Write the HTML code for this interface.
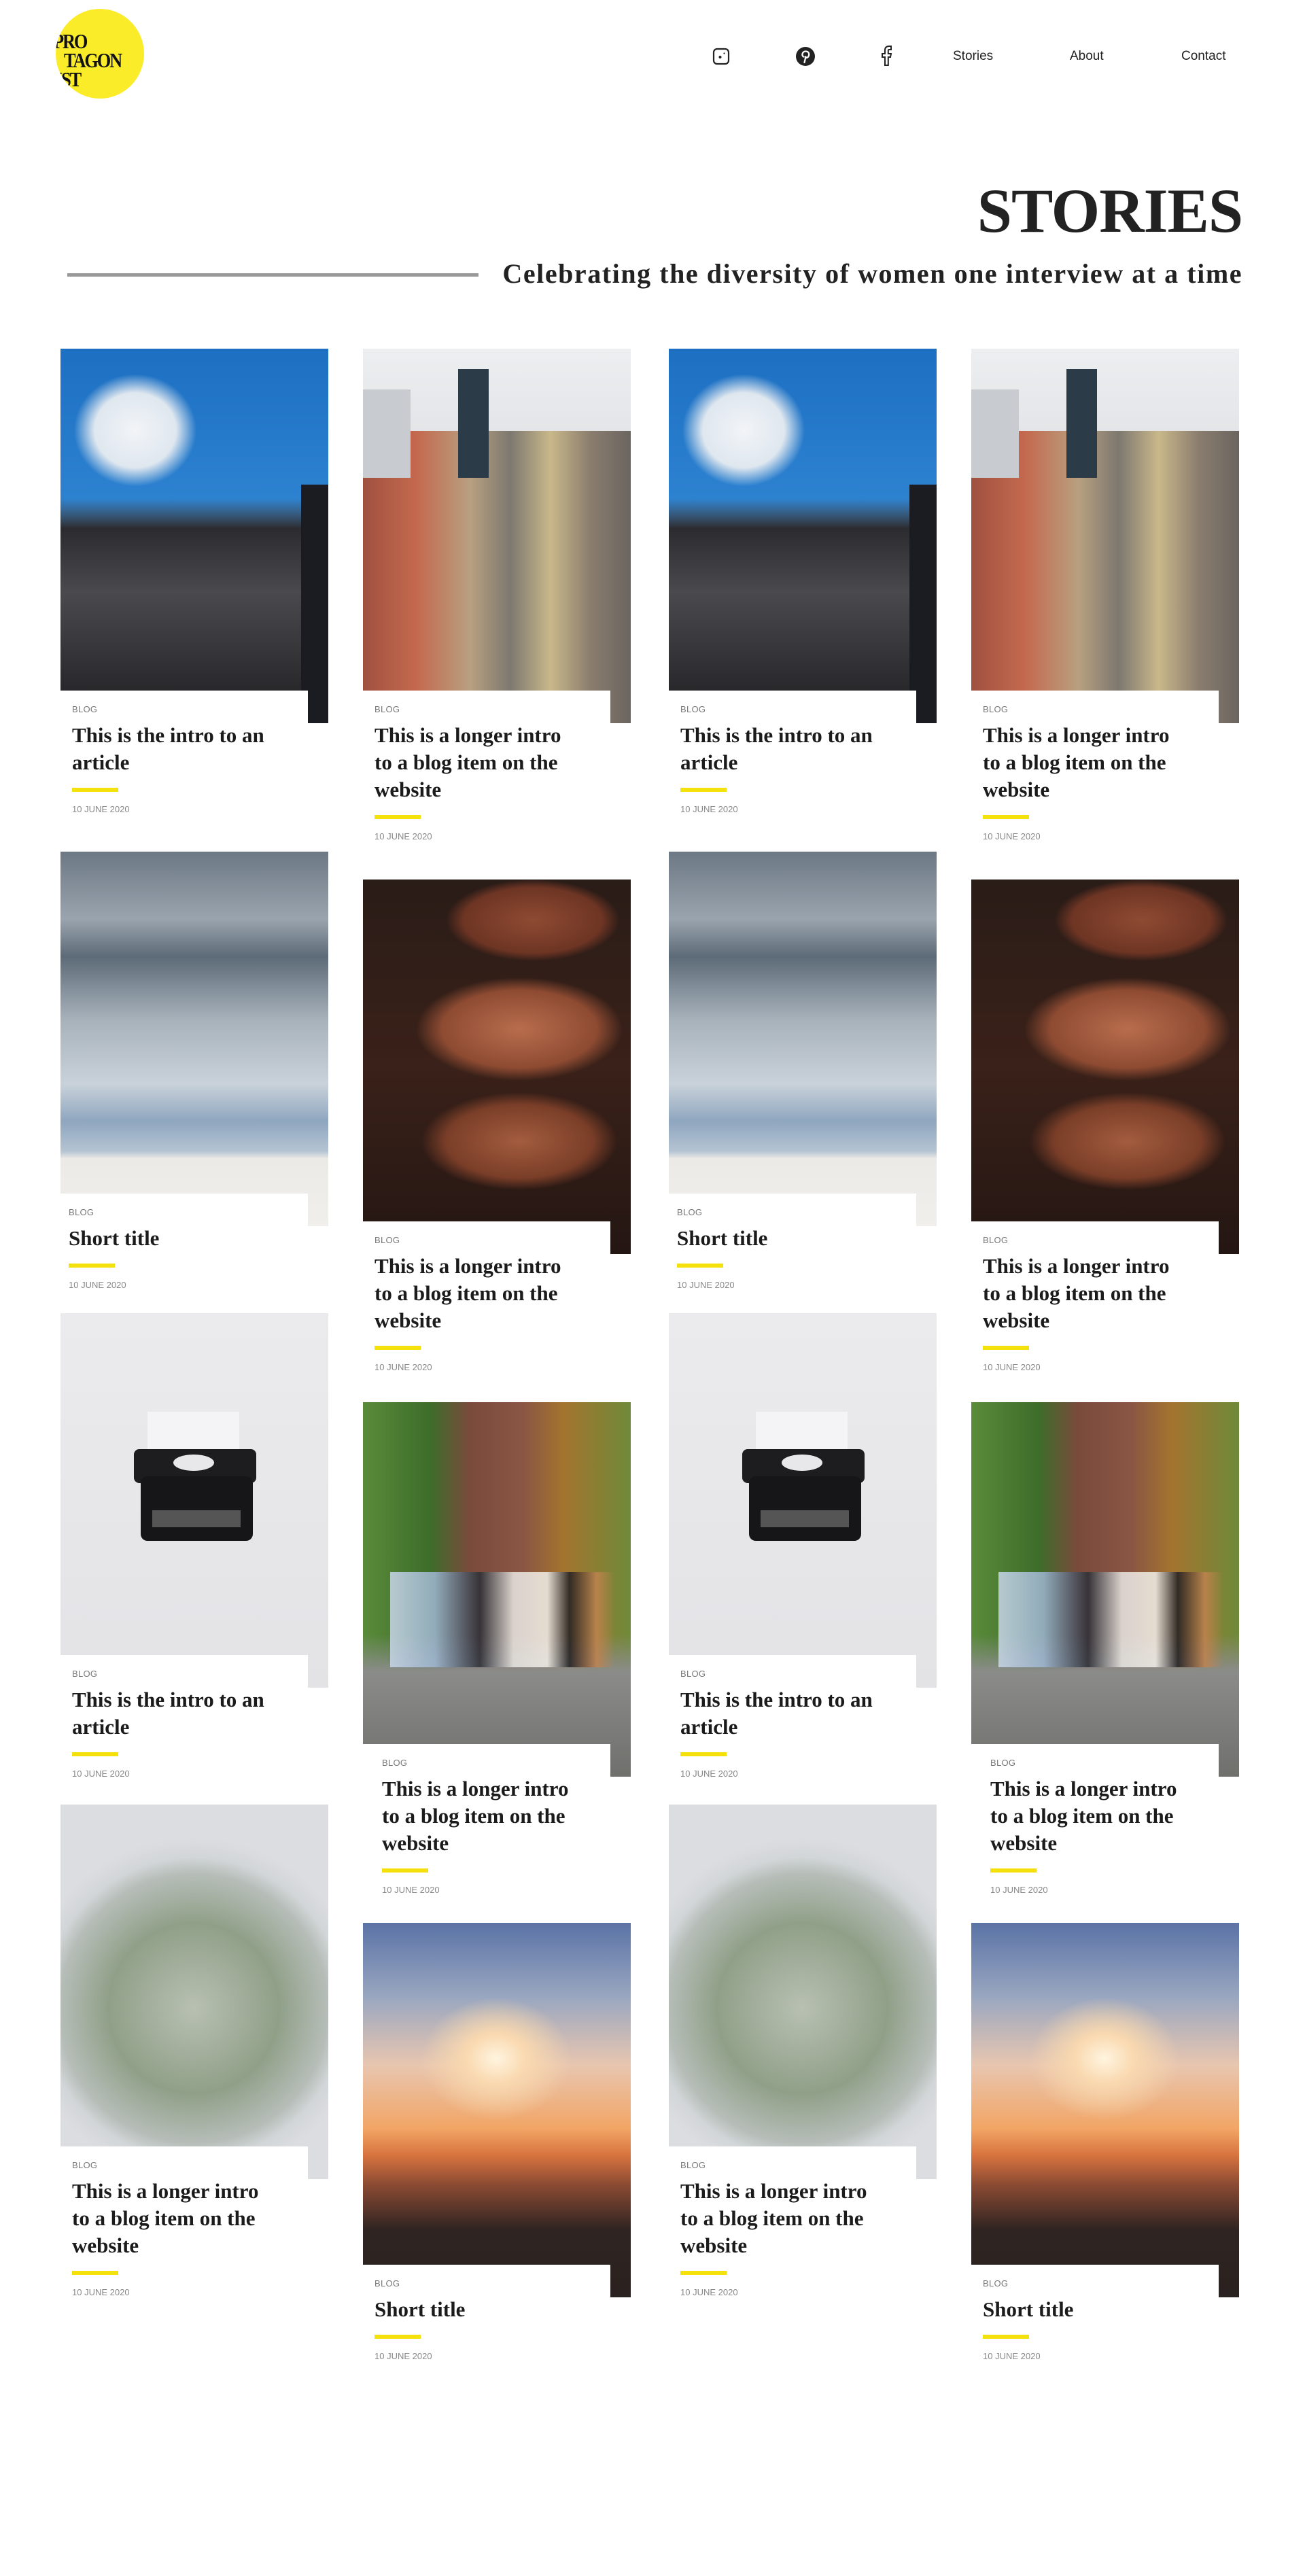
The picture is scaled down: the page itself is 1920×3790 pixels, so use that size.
<!DOCTYPE html>
<html><head><meta charset="utf-8">
<style>
*{margin:0;padding:0;box-sizing:border-box}
body{width:1920px;height:3790px;background:#fff;position:relative;overflow:hidden;font-family:"Liberation Sans",sans-serif;color:#1e1e1e}
.logo{position:absolute;left:82px;top:13px;width:130px;height:132px;border-radius:50%;background:#fbec2a;overflow:hidden}
.logo div{position:absolute;font-family:"Liberation Serif",serif;font-weight:bold;font-size:31px;letter-spacing:-2.5px;line-height:28px;color:#111;transform:scaleX(.85);transform-origin:left}
.nav{position:absolute;top:72px;font-size:19px;color:#222}
.ic{position:absolute;top:68px}
h1{position:absolute;right:92px;top:262px;font-family:"Liberation Serif",serif;font-weight:bold;font-size:92px;letter-spacing:-1px;color:#222;line-height:96px}
.sub{position:absolute;right:92px;top:380px;font-family:"Liberation Serif",serif;font-weight:bold;font-size:40px;color:#222;line-height:46px;letter-spacing:1.55px}
.rule{position:absolute;left:99px;top:402px;width:605px;height:5px;background:#999}
.img{position:absolute;width:394px;height:551px}
.box{position:absolute;width:364px;background:#fff;padding:20px 0 0 17px;min-height:60px}
.box .b{font-size:13px;line-height:16px;color:#777;letter-spacing:.3px}
.box .t{margin-top:10px;font-family:"Liberation Serif",serif;font-weight:bold;font-size:31px;line-height:40px;color:#1b1b1b;width:295px}
.box .y{margin-top:17px;width:68px;height:6px;background:#f4e10b}
.box .d{margin-top:18px;font-size:13px;line-height:16px;color:#888}
.city1{background:
linear-gradient(180deg,transparent 0,transparent 40%,#2b2b30 48%,#4a4a4e 65%,#2a2a2d 90%,#1f1f22 100%),
radial-gradient(ellipse 120px 110px at 110px 120px,#f2f4f7 0,#dfe7ef 50%,transparent 75%),
linear-gradient(180deg,#1d6fc2 0,#2d82d0 40%,#5b9ed8 50%)}
.city1::after{content:"";position:absolute;right:0;top:200px;width:40px;height:351px;background:#1a1c22}
.city2{background:
linear-gradient(180deg,#eceef0 0,#e3e5e8 22%,transparent 22%),
linear-gradient(90deg,#a05040 0,#c4694f 20%,#b8a080 40%,#7d7870 55%,#c9b88a 70%,#8a7d6e 85%,#6a6560 100%)}
.city2::before{content:"";position:absolute;left:140px;top:30px;width:45px;height:160px;background:#2c3b48}
.city2::after{content:"";position:absolute;left:0;top:60px;width:70px;height:130px;background:#c8ccd0}
.sky{background:
linear-gradient(180deg,#6c7884 0,#9aa4ae 18%,#5d6b78 28%,#a8b2bb 45%,#c9d2da 62%,#8fa6bf 72%,#b5c4d2 80%,#eceae6 82%,#f1efeb 100%)}
.faces{background:
radial-gradient(ellipse 170px 80px at 250px 60px,#8e4a32 0,#6e3524 60%,transparent 75%),
radial-gradient(ellipse 190px 95px at 230px 220px,#b86d4d 0,#8e4b32 60%,transparent 80%),
radial-gradient(ellipse 180px 90px at 230px 385px,#a35c3e 0,#7a3e28 60%,transparent 80%),
linear-gradient(180deg,#2a1c17 0,#3a2119 50%,#241613 100%)}
.type{background:linear-gradient(180deg,#ebebed 0,#e3e3e6 100%)}
.park{background:
linear-gradient(180deg,transparent 0,transparent 62%,#8b8c8a 72%,#6f706c 100%),
linear-gradient(90deg,#5a8b3a 0,#3d6d2a 25%,#7a4a3c 40%,#8a5644 60%,#a3742e 75%,#6f8a3a 100%)}
.park::after{content:"";position:absolute;left:40px;top:250px;width:330px;height:140px;background:linear-gradient(90deg,#c9d7ea 0,#9fb7d3 20%,#2b2e36 40%,#e9e8e4 55%,#f3f1ec 70%,#1f1e22 80%,#c08350 92%,transparent 100%);opacity:.85}
.planet{background:
radial-gradient(circle at 196px 300px,#b8c0b2 0,#90a088 35%,#b6bdb8 55%,#d2d6d8 62%,#dcdde0 70%)}
.sun{background:
radial-gradient(ellipse 110px 90px at 196px 200px,#fff4df 0,#f9d9b0 40%,transparent 100%),
linear-gradient(180deg,#5a73a6 0,#9aa7c0 20%,#e8c6b0 38%,#f2a565 55%,#d8743f 62%,#8a4a33 70%,#2f2421 82%,#2a2220 100%)}
</style></head><body>

<div class="logo">
<div style="left:-4px;top:34px">PRO</div>
<div style="left:12px;top:62px">TAGON</div>
<div style="left:0px;top:90px">IST</div>
</div>

<svg class="ic" style="left:1048px;top:70px" width="26" height="26" viewBox="0 0 26 26"><rect x="2" y="2" width="22" height="22" rx="5" fill="none" stroke="#222" stroke-width="2.2"/><circle cx="11.5" cy="14" r="2" fill="#222"/><circle cx="17.5" cy="8.5" r="1.1" fill="#222"/></svg>
<svg class="ic" style="left:1170px;top:68px" width="30" height="30" viewBox="0 0 30 30"><circle cx="15" cy="15" r="14" fill="#222"/><path d="M13.5 24 L15.5 15.5 M12 15.5 C9 13 10.5 7.5 15.5 7.5 C20.5 7.5 21 12.5 19.5 15 C18 17.5 15 17.5 14.5 15.5" fill="none" stroke="#fff" stroke-width="2.3" stroke-linecap="round"/></svg>
<svg class="ic" style="left:1294px;top:66px" width="20" height="32" viewBox="0 0 20 32"><path d="M8 30 V18 H4 V13 H8 V8 C8 4 10 2 14 2 H17 V7 H14 C13 7 12.8 7.5 12.8 8.5 V13 H17 L16 18 H12.8 V30 Z" fill="none" stroke="#222" stroke-width="2"/></svg>
<div class="nav" style="left:1402px">Stories</div>
<div class="nav" style="left:1574px">About</div>
<div class="nav" style="left:1738px">Contact</div>

<h1>STORIES</h1>
<div class="rule"></div>
<div class="sub">Celebrating the diversity of women one interview at a time</div>

<div class="img city1" style="left:89px;top:513px"></div>
<div class="box" style="left:89px;top:1016px"><div class="b">BLOG</div><div class="t">This is the intro to an article</div><div class="y"></div><div class="d">10 JUNE 2020</div></div>
<div class="img city1" style="left:984px;top:513px"></div>
<div class="box" style="left:984px;top:1016px"><div class="b">BLOG</div><div class="t">This is the intro to an article</div><div class="y"></div><div class="d">10 JUNE 2020</div></div>

<div class="img sky" style="left:89px;top:1253px"></div>
<div class="box" style="left:89px;top:1756px;padding-left:12px"><div class="b">BLOG</div><div class="t">Short title</div><div class="y"></div><div class="d">10 JUNE 2020</div></div>
<div class="img sky" style="left:984px;top:1253px"></div>
<div class="box" style="left:984px;top:1756px;padding-left:12px"><div class="b">BLOG</div><div class="t">Short title</div><div class="y"></div><div class="d">10 JUNE 2020</div></div>

<div class="img type" style="left:89px;top:1932px"><svg width="394" height="551" style="position:absolute;left:0;top:0"><rect x="128" y="145" width="135" height="65" fill="#f4f4f6"/><rect x="108" y="200" width="180" height="50" rx="8" fill="#1d1d1f"/><rect x="118" y="240" width="165" height="95" rx="10" fill="#161618"/><ellipse cx="196" cy="220" rx="30" ry="12" fill="#e8e8ea"/><rect x="135" y="290" width="130" height="25" fill="#555"/></svg></div>
<div class="box" style="left:89px;top:2435px"><div class="b">BLOG</div><div class="t">This is the intro to an article</div><div class="y"></div><div class="d">10 JUNE 2020</div></div>
<div class="img type" style="left:984px;top:1932px"><svg width="394" height="551" style="position:absolute;left:0;top:0"><rect x="128" y="145" width="135" height="65" fill="#f4f4f6"/><rect x="108" y="200" width="180" height="50" rx="8" fill="#1d1d1f"/><rect x="118" y="240" width="165" height="95" rx="10" fill="#161618"/><ellipse cx="196" cy="220" rx="30" ry="12" fill="#e8e8ea"/><rect x="135" y="290" width="130" height="25" fill="#555"/></svg></div>
<div class="box" style="left:984px;top:2435px"><div class="b">BLOG</div><div class="t">This is the intro to an article</div><div class="y"></div><div class="d">10 JUNE 2020</div></div>

<div class="img planet" style="left:89px;top:2655px"></div>
<div class="box" style="left:89px;top:3158px"><div class="b">BLOG</div><div class="t">This is a longer intro to a blog item on the website</div><div class="y"></div><div class="d">10 JUNE 2020</div></div>
<div class="img planet" style="left:984px;top:2655px"></div>
<div class="box" style="left:984px;top:3158px"><div class="b">BLOG</div><div class="t">This is a longer intro to a blog item on the website</div><div class="y"></div><div class="d">10 JUNE 2020</div></div>

<div class="img city2" style="left:534px;top:513px"></div>
<div class="box" style="left:534px;top:1016px"><div class="b">BLOG</div><div class="t">This is a longer intro to a blog item on the website</div><div class="y"></div><div class="d">10 JUNE 2020</div></div>
<div class="img city2" style="left:1429px;top:513px"></div>
<div class="box" style="left:1429px;top:1016px"><div class="b">BLOG</div><div class="t">This is a longer intro to a blog item on the website</div><div class="y"></div><div class="d">10 JUNE 2020</div></div>

<div class="img faces" style="left:534px;top:1294px"></div>
<div class="box" style="left:534px;top:1797px"><div class="b">BLOG</div><div class="t">This is a longer intro to a blog item on the website</div><div class="y"></div><div class="d">10 JUNE 2020</div></div>
<div class="img faces" style="left:1429px;top:1294px"></div>
<div class="box" style="left:1429px;top:1797px"><div class="b">BLOG</div><div class="t">This is a longer intro to a blog item on the website</div><div class="y"></div><div class="d">10 JUNE 2020</div></div>

<div class="img park" style="left:534px;top:2063px"></div>
<div class="box" style="left:534px;top:2566px;padding-left:28px"><div class="b">BLOG</div><div class="t">This is a longer intro to a blog item on the website</div><div class="y"></div><div class="d">10 JUNE 2020</div></div>
<div class="img park" style="left:1429px;top:2063px"></div>
<div class="box" style="left:1429px;top:2566px;padding-left:28px"><div class="b">BLOG</div><div class="t">This is a longer intro to a blog item on the website</div><div class="y"></div><div class="d">10 JUNE 2020</div></div>

<div class="img sun" style="left:534px;top:2829px"></div>
<div class="box" style="left:534px;top:3332px"><div class="b">BLOG</div><div class="t">Short title</div><div class="y"></div><div class="d">10 JUNE 2020</div></div>
<div class="img sun" style="left:1429px;top:2829px"></div>
<div class="box" style="left:1429px;top:3332px"><div class="b">BLOG</div><div class="t">Short title</div><div class="y"></div><div class="d">10 JUNE 2020</div></div>

</body></html>
